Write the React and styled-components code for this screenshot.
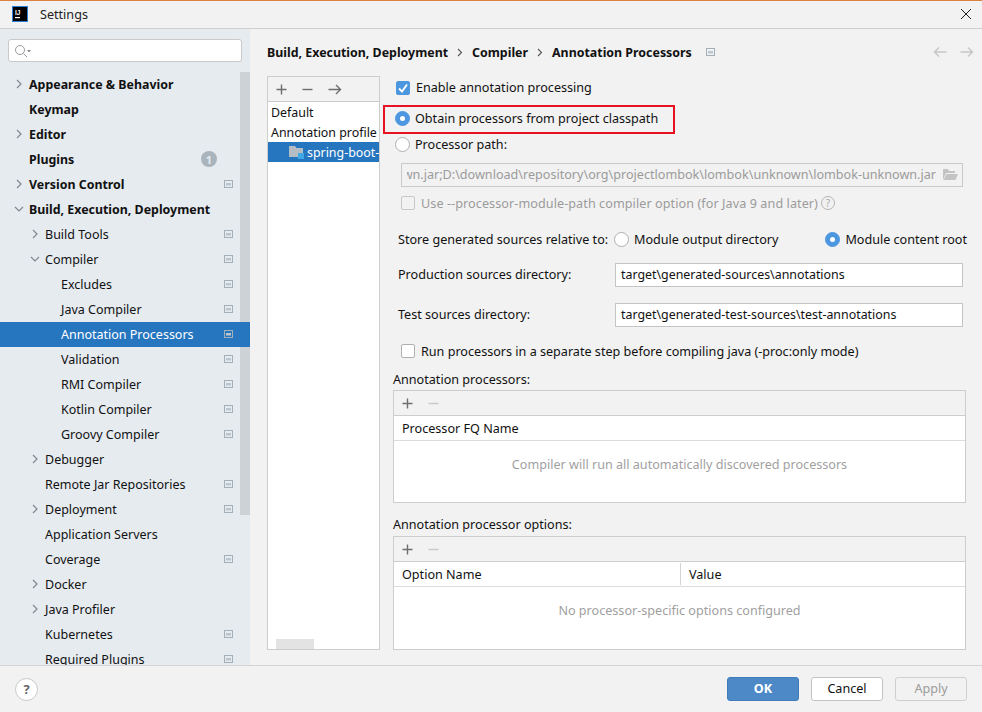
import React from "react";
import styled, { createGlobalStyle } from "styled-components";

const Global = createGlobalStyle`
  html, body { margin: 0; padding: 0; background: #f2f2f2; }
  body { font-family: "Noto Sans", "Liberation Sans", sans-serif; font-size: 12.6px; color: #111; }
  * { box-sizing: border-box; }
`;

const Window = styled.div`
  width: 982px; height: 712px; display: flex; flex-direction: column; overflow: hidden;
  background: #f2f2f2; border-top: 1px solid #d9823f;
`;
const TitleBar = styled.div`
  height: 28px; flex: none; display: flex; align-items: center; padding: 0 10px 1px 12px;
  border-bottom: 1px solid #cfcfcf; gap: 12px; color: #222;
`;
const TitleText = styled.span`flex: 1; font-size: 12.6px;`;
const Body = styled.div`flex: 1; display: flex; min-height: 0;`;
const Sidebar = styled.div`
  width: 250px; flex: none; background: #e6ebf0; position: relative; overflow: hidden;
  padding-top: 10px;
`;
const SearchBox = styled.div`
  height: 23px; margin: 0 8px 0 8px; background: #fff; border: 1px solid #c9c9c9; border-radius: 3px;
  display: flex; align-items: center; padding-left: 5px;
`;
const Tree = styled.div`margin-top: 10px;`;
const TreeRow = styled.div`
  height: 25px; display: flex; align-items: center; position: relative; padding-bottom: ${p => (p.$bold ? 0 : 1)}px;
  padding-left: ${p => p.$indent}px;
  font-weight: ${p => (p.$bold ? 700 : 400)};
  font-size: ${p => (p.$bold ? 12.4 : 12.5)}px;
  background: ${p => (p.$selected ? "#2675bf" : "transparent")};
  color: ${p => (p.$selected ? "#fff" : "#111")};
  z-index: ${p => (p.$selected ? 2 : 0)};
`;
const Arrow = styled.span`
  position: absolute; left: ${p => p.$left}px; top: 7px; width: 10px; height: 10px; display: flex;
`;
const RowIcon = styled.span`position: absolute; right: 17px; top: 8px; display: flex;`;
const Badge = styled.span`
  position: absolute; right: 33px; top: 4px; width: 16px; height: 16px; border-radius: 50%;
  background: #a9b4bd; color: #e6ebf0; font-size: 11px; display: flex; align-items: center; justify-content: center; font-weight: 700;
`;
const ScrollThumb = styled.div`
  position: absolute; right: 0; top: 43px; width: 10px; height: 443px; background: #cdd2d6; z-index: 1;
`;
const Main = styled.div`flex: 1; display: flex; flex-direction: column; padding: 0 6px 0 17px; min-width: 0;`;
const Breadcrumb = styled.div`
  height: 47px; flex: none; display: flex; align-items: center; font-weight: 700; font-size: 12.4px; color: #111; padding: 0 2px 1px 0;
`;
const Crumb = styled.span`white-space: nowrap;`;
const Sep = styled.span`display: flex; margin: 0 9px;`;
const SyncMark = styled.span`display: flex; margin-left: 14px;`;
const NavArrows = styled.span`margin-left: auto; display: flex; gap: 13px;`;
const Content = styled.div`flex: 1; display: flex; gap: 3px; min-height: 0;`;
const Profiles = styled.div`
  width: 113px; flex: none; height: 574px; border: 1px solid #cdcdcd; background: #fff; position: relative; overflow: hidden;
`;
const ProfilesBar = styled.div`
  height: 25px; background: #f2f2f2; border-bottom: 1px solid #cdcdcd; display: flex; align-items: center; padding-left: 8px; gap: 15px;
`;
const ProfileRow = styled.div`
  height: 20px; display: flex; align-items: center; white-space: nowrap; overflow: hidden; font-size: 12.4px;
  padding-left: ${p => p.$indent || 3}px; gap: 3px;
  background: ${p => (p.$selected ? "#2675bf" : "transparent")};
  color: ${p => (p.$selected ? "#fff" : "#111")};
  svg { flex: none; }
`;
const HScroll = styled.div`
  position: absolute; left: 8px; bottom: 0; width: 38px; height: 10px; background: #e3e3e3;
`;
const Form = styled.div`flex: 1; display: flex; flex-direction: column; min-width: 0;`;
const Row = styled.div`
  height: ${p => p.$h || 24}px; margin-top: ${p => p.$mt || 0}px; padding-left: ${p => p.$pl || 0}px;
  padding-bottom: ${p => p.$pb ?? 1}px;
  display: flex; align-items: center; white-space: nowrap; flex: none;
  color: ${p => (p.$muted ? "#9b9b9b" : "#111")};
  letter-spacing: ${p => (p.$muted ? "0.08px" : "normal")};
`;
const Highlight = styled.div`
  width: 292px; height: 29px; margin-top: 5px; border: 2px solid #e81123; display: flex; align-items: center; padding: 0 0 2px 10px; flex: none;
`;
const Check = styled.span`
  width: 14px; height: 14px; border-radius: 2px; flex: none; margin-right: 6px; display: flex; align-items: center; justify-content: center;
  background: ${p => (p.$checked ? "#4d97e0" : p.$disabled ? "#f2f2f2" : "#fff")};
  border: 1px solid ${p => (p.$checked ? "#4d97e0" : p.$disabled ? "#c8c8c8" : "#b0b0b0")};
`;
const Radio = styled.span`
  width: 15px; height: 15px; border-radius: 50%; flex: none; margin-right: 5px; display: flex; align-items: center; justify-content: center;
  background: ${p => (p.$on ? "#4d97e0" : "#fff")};
  border: 1px solid ${p => (p.$on ? "#4d97e0" : "#b0b0b0")};
  &::after { content: ""; width: 5px; height: 5px; border-radius: 50%; background: ${p => (p.$on ? "#fff" : "transparent")}; }
`;
const PathField = styled.div`
  width: 562px; height: 24px; margin: 7px 0 0 18px; border: 1px solid #c9c9c9; background: #f2f2f2; flex: none;
  display: flex; align-items: center; color: #9b9b9b; padding: 0 4px 1px 5px; overflow: hidden; gap: 6px;
`;
const PathText = styled.div`
  flex: 1; min-width: 0; overflow: hidden; white-space: nowrap; display: flex; justify-content: flex-end;
  span { flex: none; }
`;
const Label = styled.span`width: 216px; flex: none; padding-bottom: 1px;`;
const TextField = styled.div`
  width: 348px; height: 24px; margin-left: 1px; background: #fff; border: 1px solid #c4c4c4; padding: 0 0 1px 5px; font-size: 12.4px;
  display: flex; align-items: center;
`;
const HelpGlyph = styled.span`
  width: 14px; height: 14px; border-radius: 50%; border: 1px solid #b4b4b4; color: #a8a8a8; font-size: 10px;
  display: inline-flex; align-items: center; justify-content: center; margin-left: 3px;
`;
const Radios = styled.span`display: flex; align-items: center; margin-left: ${p => p.$ml || 0}px;`;
const TablePanel = styled.div`
  width: 573px; margin-left: 10px; flex: none; height: ${p => p.$h}px; border: 1px solid #cdcdcd; background: #fff; display: flex; flex-direction: column;
  margin-top: 1px;
`;
const TableBar = styled.div`
  height: 25px; flex: none; background: #f2f2f2; border-bottom: 1px solid #cdcdcd; display: flex; align-items: center; padding-left: 8px; gap: 15px;
`;
const TableHead = styled.div`
  height: 25px; flex: none; border-bottom: 1px solid #dcdcdc; display: flex; align-items: center; color: #111;
`;
const HeadCell = styled.div`
  padding-left: 8px; ${p => (p.$w ? `width: ${p.$w}px; border-right: 1px solid #d4d4d4; height: 22px; display: flex; align-items: center;` : "")}
`;
const Empty = styled.div`
  flex: 1; display: flex; justify-content: center; padding-top: 15px; color: #9f9f9f;
`;
const Footer = styled.div`
  height: 47px; flex: none; border-top: 1px solid #d4d4d4; background: #f2f2f2; display: flex; align-items: center;
  padding: 0 15px 0 15px; gap: 12px;
`;
const HelpButton = styled.div`
  width: 23px; height: 23px; border-radius: 50%; background: #fff; border: 1px solid #c8c8c8; color: #666; font-weight: 700; font-size: 13px;
  display: flex; align-items: center; justify-content: center; margin-right: auto;
`;
const Button = styled.div`
  width: 72px; height: 24px; border-radius: 3px; display: flex; align-items: center; justify-content: center; padding-bottom: 1px;
  background: ${p => (p.$primary ? "#4d88c7" : p.$disabled ? "#f2f2f2" : "#fff")};
  color: ${p => (p.$primary ? "#fff" : p.$disabled ? "#9b9b9b" : "#111")};
  border: 1px solid ${p => (p.$primary ? "#3f7cbc" : p.$disabled ? "#cfcfcf" : "#c4c4c4")};
  font-weight: ${p => (p.$primary ? 700 : 400)};
`;

const Logo = () => (
  <svg width="16" height="16" viewBox="0 0 16 16">
    <rect x="0.5" y="0.5" width="15" height="15" fill="#000" stroke="#2d7fd3" />
    <text x="3" y="8.5" fontSize="6.5" fontWeight="700" fill="#fff" fontFamily="Liberation Sans">IJ</text>
    <rect x="3" y="11" width="5" height="1.2" fill="#fff" />
  </svg>
);
const CloseIcon = () => (
  <svg width="12" height="12" viewBox="0 0 12 12"><path d="M1 1l10 10M11 1L1 11" stroke="#222" strokeWidth="1" fill="none" /></svg>
);
const SearchIcon = () => (
  <svg width="18" height="14" viewBox="0 0 18 14">
    <circle cx="6" cy="6" r="4.5" fill="none" stroke="#9a9a9a" />
    <path d="M9.5 9.5l3.5 3.5" stroke="#9a9a9a" fill="none" />
    <path d="M13 6h4l-2 2.4z" fill="#8a8a8a" />
  </svg>
);
const Chevron = ({ down }) => (
  <svg width="10" height="10" viewBox="0 0 10 10">
    <path d={down ? "M1 3l4 4 4-4" : "M3 1l4 4-4 4"} fill="none" stroke="#808890" strokeWidth="1.2" />
  </svg>
);
const ProjIcon = () => (
  <svg width="9" height="8" viewBox="0 0 9 8">
    <rect x="0.5" y="0.5" width="8" height="7" fill="none" stroke="#a3afb9" />
    <rect x="2" y="3" width="5" height="2.5" fill="#bcc6cf" />
  </svg>
);
const CrumbChevron = () => (
  <svg width="6" height="9" viewBox="0 0 6 9"><path d="M1 1l3.5 3.5L1 8" fill="none" stroke="#555" strokeWidth="1.1" /></svg>
);
const NavArrow = ({ right }) => (
  <svg width="14" height="12" viewBox="0 0 14 12">
    <path d={right ? "M0.5 6h12M8 1.5L12.5 6 8 10.5" : "M13.5 6H1.5M6 1.5L1.5 6 6 10.5"} fill="none" stroke="#c6c6c6" strokeWidth="1.4" />
  </svg>
);
const Plus = () => (
  <svg width="11" height="11" viewBox="0 0 11 11"><path d="M5.5 0.5v10M0.5 5.5h10" stroke="#6e6e6e" strokeWidth="1.4" /></svg>
);
const Minus = ({ light }) => (
  <svg width="11" height="11" viewBox="0 0 11 11"><path d="M0.5 5.5h10" stroke={light ? "#c8c8c8" : "#6e6e6e"} strokeWidth="1.4" /></svg>
);
const ArrowRight = () => (
  <svg width="14" height="11" viewBox="0 0 14 11"><path d="M0.5 5.5h12M8 1L12.5 5.5 8 10" fill="none" stroke="#6e6e6e" strokeWidth="1.4" /></svg>
);
const CheckMark = () => (
  <svg width="12" height="12" viewBox="0 0 12 12"><path d="M2 6.5l3 3 5-7" fill="none" stroke="#fff" strokeWidth="1.8" /></svg>
);
const ModuleIcon = () => (
  <svg width="15" height="13" viewBox="0 0 15 13">
    <path d="M0 0h6l1.5 2H14v9H0z" fill="#b4bcc4" />
    <rect x="9" y="7" width="6" height="6" fill="#3fa9e6" />
  </svg>
);
const FolderIcon = () => (
  <svg width="16" height="13" viewBox="0 0 16 13">
    <path d="M1 1h5l1 2h6v2H4L1 12z" fill="#c4c4c4" />
    <path d="M4.5 6H16l-2.5 6H1.500z" fill="#c4c4c4" />
  </svg>
);

const tree = [
  { t: "Appearance & Behavior", b: 1, i: 29, a: 14 },
  { t: "Keymap", b: 1, i: 29 },
  { t: "Editor", b: 1, i: 29, a: 14 },
  { t: "Plugins", b: 1, i: 29, badge: 1 },
  { t: "Version Control", b: 1, i: 29, a: 14, p: 1 },
  { t: "Build, Execution, Deployment", b: 1, i: 29, a: 14, d: 1 },
  { t: "Build Tools", i: 45, a: 30, p: 1 },
  { t: "Compiler", i: 45, a: 30, d: 1, p: 1 },
  { t: "Excludes", i: 61, p: 1 },
  { t: "Java Compiler", i: 61, p: 1 },
  { t: "Annotation Processors", i: 61, p: 1, s: 1 },
  { t: "Validation", i: 61, p: 1 },
  { t: "RMI Compiler", i: 61, p: 1 },
  { t: "Kotlin Compiler", i: 61, p: 1 },
  { t: "Groovy Compiler", i: 61, p: 1 },
  { t: "Debugger", i: 45, a: 30 },
  { t: "Remote Jar Repositories", i: 45, p: 1 },
  { t: "Deployment", i: 45, a: 30, p: 1 },
  { t: "Application Servers", i: 45 },
  { t: "Coverage", i: 45, p: 1 },
  { t: "Docker", i: 45, a: 30 },
  { t: "Java Profiler", i: 45, a: 30 },
  { t: "Kubernetes", i: 45, p: 1 },
  { t: "Required Plugins", i: 45, p: 1 },
];

export default function App() {
  return (
    <>
      <Global />
      <Window>
        <TitleBar>
          <Logo />
          <TitleText>Settings</TitleText>
          <CloseIcon />
        </TitleBar>
        <Body>
          <Sidebar>
            <SearchBox><SearchIcon /></SearchBox>
            <ScrollThumb />
            <Tree>
              {tree.map(r => (
                <TreeRow key={r.t} $indent={r.i} $bold={r.b} $selected={r.s}>
                  {r.a && <Arrow $left={r.a}><Chevron down={r.d} /></Arrow>}
                  {r.t}
                  {r.badge && <Badge>1</Badge>}
                  {r.p && <RowIcon><ProjIcon /></RowIcon>}
                </TreeRow>
              ))}
            </Tree>
          </Sidebar>
          <Main>
            <Breadcrumb>
              <Crumb>Build, Execution, Deployment</Crumb>
              <Sep><CrumbChevron /></Sep>
              <Crumb>Compiler</Crumb>
              <Sep><CrumbChevron /></Sep>
              <Crumb>Annotation Processors</Crumb>
              <SyncMark><ProjIcon /></SyncMark>
              <NavArrows><NavArrow /><NavArrow right /></NavArrows>
            </Breadcrumb>
            <Content>
              <Profiles>
                <ProfilesBar><Plus /><Minus /><ArrowRight /></ProfilesBar>
                <ProfileRow>Default</ProfileRow>
                <ProfileRow>Annotation profile</ProfileRow>
                <ProfileRow $indent={21} $selected><ModuleIcon />spring-boot-demo</ProfileRow>
                <HScroll />
              </Profiles>
              <Form>
                <Row $pl={13}><Check $checked><CheckMark /></Check>Enable annotation processing</Row>
                <Highlight><Radio $on />Obtain processors from project classpath</Highlight>
                <Row $h={22} $pl={12}><Radio />Processor path:</Row>
                <PathField>
                  <PathText><span>lombok-unknown.jar;D:\download\repository\org\projectlombok\lombok\unknown\lombok-unknown.jar</span></PathText>
                  <FolderIcon />
                </PathField>
                <Row $mt={4} $pl={18} $muted $pb={0}>
                  <Check $disabled />Use --processor-module-path compiler option (for Java 9 and later)<HelpGlyph>?</HelpGlyph>
                </Row>
                <Row $mt={13} $pl={15}>
                  <Label>Store generated sources relative to:</Label>
                  <Radios><Radio />Module output directory</Radios>
                  <Radios $ml={47}><Radio $on />Module content root</Radios>
                </Row>
                <Row $mt={11} $pl={15} $pb={0}>
                  <Label>Production sources directory:</Label>
                  <TextField>target\generated-sources\annotations</TextField>
                </Row>
                <Row $mt={16} $pl={15} $pb={0}>
                  <Label>Test sources directory:</Label>
                  <TextField>target\generated-test-sources\test-annotations</TextField>
                </Row>
                <Row $mt={12} $pl={18} $pb={0}><Check />Run processors in a separate step before compiling java (-proc:only mode)</Row>
                <Row $h={20} $mt={6} $pl={10} $pb={0}>Annotation processors:</Row>
                <TablePanel $h={113}>
                  <TableBar><Plus /><Minus light /></TableBar>
                  <TableHead><HeadCell>Processor FQ Name</HeadCell></TableHead>
                  <Empty>Compiler will run all automatically discovered processors</Empty>
                </TablePanel>
                <Row $h={20} $mt={12} $pl={10}>Annotation processor options:</Row>
                <TablePanel $h={114}>
                  <TableBar><Plus /><Minus light /></TableBar>
                  <TableHead><HeadCell $w={287}>Option Name</HeadCell><HeadCell>Value</HeadCell></TableHead>
                  <Empty>No processor-specific options configured</Empty>
                </TablePanel>
              </Form>
            </Content>
          </Main>
        </Body>
        <Footer>
          <HelpButton>?</HelpButton>
          <Button $primary>OK</Button>
          <Button>Cancel</Button>
          <Button $disabled>Apply</Button>
        </Footer>
      </Window>
    </>
  );
}
